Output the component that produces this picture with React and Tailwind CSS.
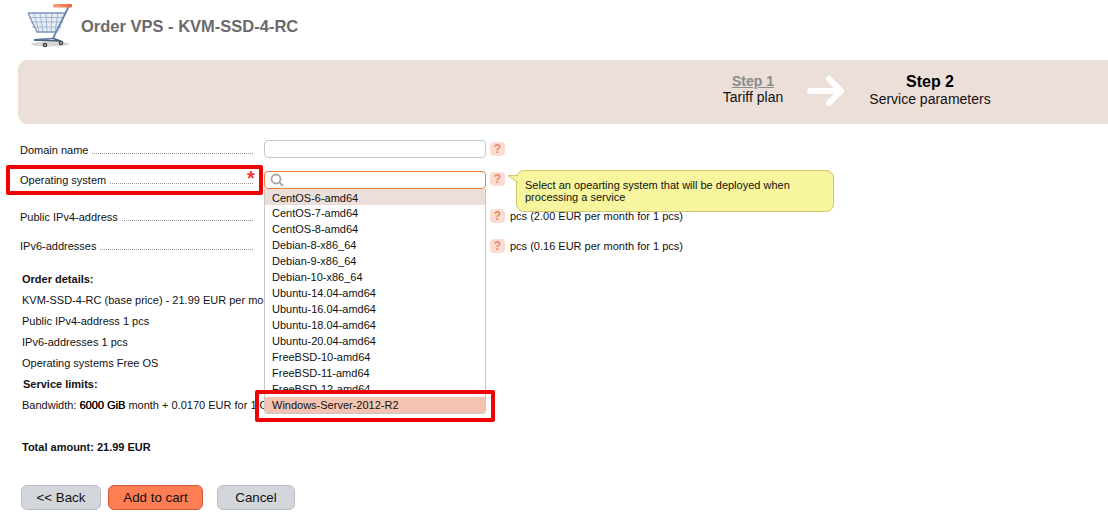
const font = { fontFamily: '"Liberation Sans", Arial, sans-serif' };

function Cart() {
  return (
    <svg width="48" height="46" viewBox="0 0 48 46" className="block">
      <defs>
        <linearGradient id="h" x1="0" x2="1" y1="0" y2="0">
          <stop offset="0" stopColor="#f7a07c" />
          <stop offset="1" stopColor="#e8693a" />
        </linearGradient>
      </defs>
      <ellipse cx="24" cy="41" rx="19" ry="2.500" fill="#000" opacity="0.16" />
      <path d="M2 10 L39 10 L34 29 L11 29 Z" fill="#dfe7f1" opacity="0.75" />
      <g stroke="#9db0cc" strokeWidth="0.9" fill="none">
        <path d="M8 10 L13 29 M14 10 L17 29 M20 10 L21 29 M26 10 L25 29 M32 10 L29 29" />
        <path d="M3 14.500 L38 14.500 M4.500 19 L37 19 M6 24 L35.500 24" />
      </g>
      <path d="M2 10 L39 10 M2 10 L11 29 L30 29" stroke="#7c95b9" strokeWidth="1.300" fill="none" />
      <path d="M42.500 4 L27 35.500 L8 37" stroke="#6483ad" strokeWidth="1.800" fill="none" />
      <path d="M8 37 L33 38 M27 35.500 L35 38" stroke="#4a5d78" strokeWidth="1.500" fill="none" />
      <rect x="27" y="1" width="19" height="3.500" rx="1" fill="url(#h)" />
      <circle cx="19" cy="42" r="2.300" fill="#3c3c3c" />
      <circle cx="35" cy="40" r="2.300" fill="#3c3c3c" />
      <circle cx="19" cy="42" r="0.900" fill="#ccc" />
      <circle cx="35" cy="40" r="0.900" fill="#ccc" />
    </svg>
  );
}

function Help({ className = "" }) {
  return (
    <span className={"flex h-[14px] w-[15px] shrink-0 items-center justify-center rounded-[4px] bg-[#fbdcd3] text-[12px] font-bold leading-none text-[#e98a6c] " + className}>
      ?
    </span>
  );
}

function Label({ text, className = "" }) {
  return (
    <div className={"flex w-[233px] shrink-0 items-baseline " + className}>
      <span className="shrink-0 text-[11px] text-[#111]">{text}</span>
      <span className="ml-[4px] flex-1 border-b border-dotted border-[#999]" />
    </div>
  );
}

const osList = [
  "CentOS-6-amd64", "CentOS-7-amd64", "CentOS-8-amd64", "Debian-8-x86_64", "Debian-9-x86_64",
  "Debian-10-x86_64", "Ubuntu-14.04-amd64", "Ubuntu-16.04-amd64", "Ubuntu-18.04-amd64",
  "Ubuntu-20.04-amd64", "FreeBSD-10-amd64", "FreeBSD-11-amd64", "FreeBSD-12-amd64",
];

function Dropdown() {
  return (
    <div className="absolute left-[264px] top-[189px] z-10 w-[222px] rounded-b-[4px] border-x border-b border-[#c8c8c8] bg-white text-[11px] leading-[16px] text-[#111]">
      {osList.map((o, i) => (
        <div key={o} className={"h-[16px] pl-[7px] " + (i === 0 ? "bg-[#ecdfd9] pt-px" : "")}>{o}</div>
      ))}
      <div className="h-[16px] rounded-b-[3px] bg-[#f5c3b2] pl-[7px]">Windows-Server-2012-R2</div>
    </div>
  );
}

function Tooltip() {
  return (
    <div className="absolute left-[516px] top-[170px] z-10 h-[42px] w-[318px] rounded-[8px] border border-[#cfc56b] bg-[#f7f69e] pl-[8px] pt-[8px] text-[11px] leading-[12px] text-[#111]">
      <svg width="10" height="8" viewBox="0 0 10 8" className="absolute left-[-9px] top-[4px]">
        <path d="M0 0.500 L10 0.500 L10 8 Z" fill="#f7f69e" />
        <path d="M10 0.500 L0 0.500 L10 7.500" fill="none" stroke="#cfc56b" />
      </svg>
      Select an opearting system that will be deployed when
      <br />
      processing a service
    </div>
  );
}

function Btn({ children, primary, className = "" }) {
  return (
    <button className={"flex h-[25px] items-center justify-center rounded-[6px] border text-[13.333px] text-[#111] " + (primary ? "border-[#d2573a] bg-[#ff7d52] " : "border-[#b9bdc3] bg-[#d3d6db] ") + className}>
      {children}
    </button>
  );
}

export default function App() {
  return (
    <div style={font} className="relative h-[531px] w-[1108px] overflow-hidden bg-white">
      <header className="flex h-[60px] items-start pl-[26px] pt-[3px]">
        <Cart />
        <h1 className="ml-[7px] mt-[13px] text-[16.5px] font-bold leading-[20px] text-[#6a6a6a]">Order VPS - KVM-SSD-4-RC</h1>
      </header>

      <div className="ml-[18px] flex h-[64px] rounded-l-[9px] bg-[#ecdfd9] pt-[13px]">
        <div className="ml-[703px] flex w-[64px] flex-col items-center text-[14px] leading-[16px]">
          <span className="font-bold text-[#8a8a8a] underline">Step 1</span>
          <span className="text-[#111]">Tariff plan</span>
        </div>
        <svg width="38" height="32" viewBox="0 0 38 32" className="ml-[22px] mt-[2px]">
          <path d="M3 16 H34 M22 4 L34 16 L22 28" fill="none" stroke="#fff" strokeWidth="6" strokeLinecap="round" strokeLinejoin="round" />
        </svg>
        <div className="ml-[20px] flex w-[130px] flex-col items-center whitespace-nowrap text-[14px] leading-[17px] text-[#111]">
          <span className="text-[16px] font-bold leading-[18px] text-black">Step 2</span>
          <span>Service parameters</span>
        </div>
      </div>

      <div className="ml-[20px] mt-[16px] flex h-[18px] items-center">
        <Label text="Domain name" className="mt-[2px]" />
        <div className="ml-[11px] h-[18px] w-[222px] rounded-[4px] border border-[#c8c8c8] bg-white" />
        <Help className="ml-[4px]" />
      </div>

      <div className="ml-[20px] mt-[13px] flex h-[18px] items-center">
        <Label text="Operating system" />
        <div className="ml-[11px] flex h-[18px] w-[222px] items-center rounded-[4px] border border-[#e8813f] bg-white pl-[4px]">
          <svg width="16" height="16" viewBox="0 0 16 16" fill="none" stroke="#a8a8a8" strokeWidth="1.800">
            <circle cx="7" cy="7" r="4.500" />
            <path d="M10.500 10.500 L14 14" />
          </svg>
        </div>
        <Help className="-mt-[3px] ml-[4px]" />
      </div>

      <div className="ml-[20px] mt-[19px] flex h-[18px] items-center">
        <Label text="Public IPv4-address" />
        <Help className="-mt-[2px] ml-[237px]" />
        <span className="-mt-[1px] ml-[5px] text-[11px] text-[#111]">pcs (2.00 EUR per month for 1 pcs)</span>
      </div>

      <div className="ml-[20px] mt-[11px] flex h-[18px] items-center">
        <Label text="IPv6-addresses" />
        <Help className="ml-[237px]" />
        <span className="ml-[5px] text-[11px] text-[#111]">pcs (0.16 EUR per month for 1 pcs)</span>
      </div>

      <div className="ml-[22px] mt-[14px] w-[242px] whitespace-nowrap text-[11px] leading-[21px] text-[#111]">
        <div className="font-bold">Order details:</div>
        <div>KVM-SSD-4-RC (base price) - 21.99 EUR per month</div>
        <div>Public IPv4-address 1 pcs</div>
        <div>IPv6-addresses 1 pcs</div>
        <div>Operating systems Free OS</div>
        <div className="pl-px font-bold">Service limits:</div>
        <div>Bandwidth: <span className="text-black [text-shadow:0.15px_0_0_#000]">6000 GiB</span> month + 0.0170 EUR for 1 GiB</div>
        <div className="mt-[21px] font-bold">Total amount: 21.99 EUR</div>
      </div>

      <div className="ml-[21px] mt-[27px] flex">
        <Btn className="w-[80px]">&lt;&lt; Back</Btn>
        <Btn primary className="ml-[7px] w-[95px]">Add to cart</Btn>
        <Btn className="ml-[14px] w-[78px]">Cancel</Btn>
      </div>

      <Dropdown />
      <Tooltip />

      <span className="absolute left-[247px] top-[168px] z-20 text-[20px] font-bold leading-[20px] text-[#f03a2e]">*</span>
      <div className="pointer-events-none absolute left-[6px] top-[165px] z-20 h-[30px] w-[257px] rounded-[2px] border-[4px] border-[#f00000]" />
      <div className="pointer-events-none absolute left-[255px] top-[390px] z-20 h-[32px] w-[240px] rounded-[2px] border-[4px] border-[#f00000]" />
    </div>
  );
}
